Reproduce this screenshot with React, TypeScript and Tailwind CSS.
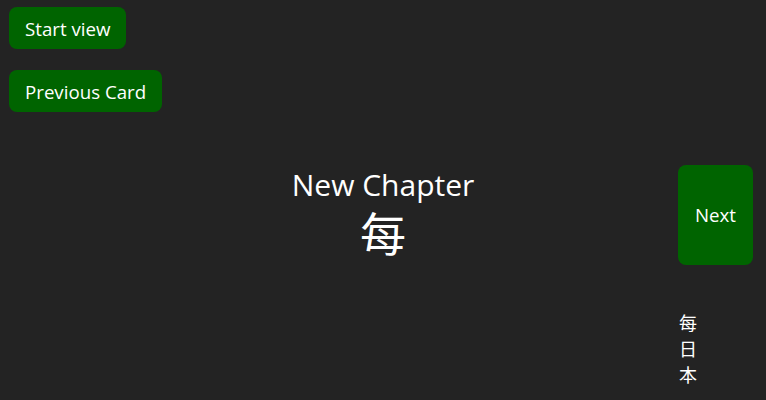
import React from 'react';

const font = "font-['Segoe_UI','Open_Sans','Noto_Sans','Noto_Sans_CJK_JP',sans-serif]";

export default function App() {
  return (
    <div className={`h-[400px] w-full overflow-hidden bg-[#232323] text-white ${font}`}>
      <div className="flex flex-col items-start gap-[21px] pl-[9px] pt-[7px]">
        <button className="h-[42px] rounded-lg bg-[#006400] px-4 pb-[1px] pt-[3px] text-[18.7px] text-white">Start view</button>
        <button className="h-[42px] rounded-lg bg-[#006400] px-4 pb-[1px] pt-[3px] text-[18.7px] text-white">Previous Card</button>
      </div>

      <div className="mt-[53px] grid grid-cols-[88px_1fr_88px]">
        <div />
        <div className="flex flex-col items-center">
          <div className="text-[30px] leading-[40px]">New Chapter</div>
          <div className="font-['Noto_Sans_CJK_JP',sans-serif] text-[46px] leading-[52px]">每</div>
        </div>
        <div className="flex flex-col items-start">
          <button className="h-[100px] w-[75px] rounded-lg bg-[#006400] text-[18.7px] text-white">Next</button>
          <div className="ml-[1px] mt-[44px] flex flex-col font-['Noto_Sans_CJK_JP',sans-serif] text-[18px] leading-[26px]">
            <span>每</span>
            <span>日</span>
            <span>本</span>
          </div>
        </div>
      </div>
    </div>
  );
}
